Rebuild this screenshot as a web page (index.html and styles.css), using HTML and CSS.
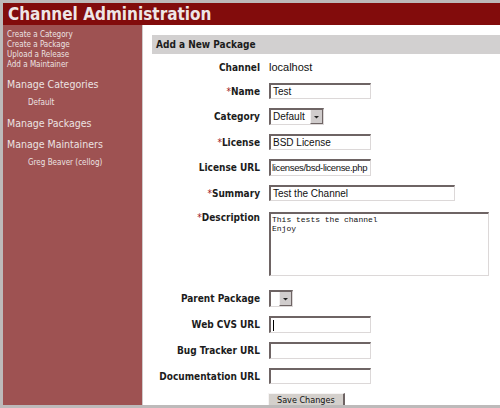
FILE: index.html
```html
<!DOCTYPE html>
<html>
<head>
<meta charset="utf-8">
<link rel="stylesheet" href="styles.css">
</head>
<body>
<div class="frame">
  <header class="topbar"><h1>Channel Administration</h1></header>
  <div class="main">
    <nav class="sidebar">
      <ul class="actions">
        <li>Create a Category</li>
        <li>Create a Package</li>
        <li>Upload a Release</li>
        <li>Add a Maintainer</li>
      </ul>
      <h2>Manage Categories</h2>
      <div class="sub">Default</div>
      <h2>Manage Packages</h2>
      <h2>Manage Maintainers</h2>
      <div class="sub">Greg Beaver (cellog)</div>
    </nav>
    <section class="content">
      <div class="section-head">Add a New Package</div>
      <form class="form">
        <label class="lbl">Channel</label>
        <div class="val plain">localhost</div>

        <label class="lbl"><span class="req">*</span>Name</label>
        <div class="val"><span class="input w100">Test</span></div>

        <label class="lbl">Category</label>
        <div class="val"><span class="select"><span class="sel-text">Default</span><span class="sel-btn"><svg width="7" height="4" viewBox="0 0 7 4"><path d="M1 1h5L3.5 3.5z" fill="#222"/></svg></span></span></div>

        <label class="lbl"><span class="req">*</span>License</label>
        <div class="val"><span class="input w100">BSD License</span></div>

        <label class="lbl">License URL</label>
        <div class="val"><span class="input w100 h17 tight">licenses/bsd-license.php</span></div>

        <label class="lbl"><span class="req">*</span>Summary</label>
        <div class="val"><span class="input w185">Test the Channel</span></div>

        <label class="lbl top"><span class="req">*</span>Description</label>
        <div class="val desc"><span class="textarea">This tests the channel
Enjoy</span></div>

        <label class="lbl parent">Parent Package</label>
        <div class="val parent"><span class="select small"><span class="sel-text"></span><span class="sel-btn"><svg width="7" height="4" viewBox="0 0 7 4"><path d="M1 1h5L3.5 3.5z" fill="#222"/></svg></span></span></div>

        <label class="lbl">Web CVS URL</label>
        <div class="val"><span class="input w100 h17"><span class="caret"></span></span></div>

        <label class="lbl">Bug Tracker URL</label>
        <div class="val"><span class="input w100 h17"></span></div>

        <label class="lbl">Documentation URL</label>
        <div class="val"><span class="input w100"></span></div>

        <div></div>
        <div class="val submit"><span class="button">Save Changes</span></div>
      </form>
    </section>
  </div>
</div>
</body>
</html>
```
FILE: styles.css
```css
html, body {
  margin: 0;
  padding: 0;
}
body {
  width: 500px;
  height: 408px;
  overflow: hidden;
  background: #bdbaba;
  font-family: "DejaVu Sans", Verdana, sans-serif;
}
.frame {
  margin: 3px 0 0 3px;
  height: 402px;
  display: flex;
  flex-direction: column;
  background: #fff;
  overflow: hidden;
}
.topbar {
  height: 22px;
  background: #820c0c;
  flex: none;
}
.topbar h1 {
  margin: 0;
  padding: 0 0 0 5px;
  font-family: "DejaVu Sans Condensed", "DejaVu Sans", sans-serif;
  font-weight: bold;
  font-size: 17px;
  line-height: 22px;
  color: #eee6e6;
}
.main {
  flex: 1;
  display: flex;
  min-height: 0;
}
.sidebar {
  flex: none;
  width: 140px;
  box-sizing: border-box;
  background: #9e5252;
  border-right: 1px solid #cfcaca;
  color: #ece2e2;
  padding: 5px 0 0 4px;
}
.actions {
  list-style: none;
  margin: 0;
  padding: 0;
  font-family: "DejaVu Sans Condensed", "DejaVu Sans", sans-serif;
  font-size: 8px;
  line-height: 10px;
}
.sidebar h2 {
  margin: 7px 0 0;
  font-family: "DejaVu Sans Condensed", "DejaVu Sans", sans-serif;
  font-weight: normal;
  font-size: 10.5px;
  line-height: 14px;
}
.sidebar .sub {
  font-family: "DejaVu Sans Condensed", "DejaVu Sans", sans-serif;
  font-size: 8px;
  line-height: 10px;
  margin-top: 7px;
  padding: 0 0 1px 21px;
}
.content {
  flex: 1;
  padding: 10px 0 0 9px;
  min-width: 0;
}
.section-head {
  height: 19px;
  background: #d2d0d0;
  font-family: "DejaVu Sans Condensed", "DejaVu Sans", sans-serif;
  font-weight: bold;
  font-size: 10px;
  line-height: 19px;
  color: #1c1c1c;
  padding-left: 4px;
}
.form {
  display: grid;
  grid-template-columns: 108px auto;
  column-gap: 9px;
  row-gap: 9px;
  margin-top: 7px;
  align-items: center;
}
.lbl {
  text-align: right;
  font-family: "DejaVu Sans Condensed", "DejaVu Sans", sans-serif;
  font-weight: bold;
  font-size: 10px;
  color: #1c1c1c;
  white-space: nowrap;
}
.lbl.top { align-self: start; padding-top: 2px; }
.req { color: #a01818; font-weight: normal; }
.val {
  display: flex;
  font-family: "Liberation Sans", Arial, sans-serif;
  font-size: 10px;
  color: #111;
}
.val.plain {
  font-size: 11px;
  height: 13px;
  line-height: 13px;
}
.input {
  box-sizing: border-box;
  height: 16px;
  border-style: solid;
  border-width: 2px 1px 1px 2px;
  border-color: #6e6464 #dcd8d8 #dcd8d8 #6e6464;
  background: #fff;
  font-size: 10px;
  line-height: 13px;
  padding: 0 2px;
  white-space: nowrap;
  overflow: hidden;
  display: block;
}
.input.h17 { height: 17px; line-height: 14px; }
.input.tight { padding: 0 0 0 1px; font-size: 9.5px; letter-spacing: -0.35px; }
.w100 { width: 102px; }
.w185 { width: 186px; }
.caret {
  display: inline-block;
  width: 1px;
  height: 11px;
  background: #000;
  vertical-align: middle;
}
.select {
  box-sizing: border-box;
  height: 17px;
  display: flex;
  border-style: solid;
  border-width: 2px 1px 1px 2px;
  border-color: #6e6464 #dcd8d8 #dcd8d8 #6e6464;
  background: #fff;
}
.sel-text {
  width: 36px;
  padding-left: 2px;
  font-size: 10px;
  line-height: 13px;
}
.select.small .sel-text { width: 7px; padding: 0; }
.sel-btn {
  width: 13px;
  background: #d0cccc;
  border-left: 1px solid #f4f2f2;
  border-right: 1px solid #6e6464;
  border-bottom: 1px solid #6e6464;
  box-sizing: border-box;
  display: flex;
  align-items: center;
  justify-content: center;
  margin: 0 0 0 1px;
}
.desc { margin-top: 2px; }
.textarea {
  box-sizing: border-box;
  width: 220px;
  height: 64px;
  border-style: solid;
  border-width: 2px 1px 1px 2px;
  border-color: #6e6464 #dcd8d8 #dcd8d8 #6e6464;
  font-family: "Liberation Mono", "Courier New", monospace;
  font-size: 8px;
  line-height: 9px;
  padding: 1px 1px;
  white-space: pre;
  display: block;
}
.parent { margin-top: 5px; }
.submit { margin-top: 0; }
.button {
  box-sizing: border-box;
  height: 16px;
  padding: 0 8px;
  margin-left: -1px;
  background: #d4d0cc;
  border-style: solid;
  border-width: 1px 2px 2px 1px;
  border-color: #f6f4f4 #6e6464 #6e6464 #f6f4f4;
  font-family: "DejaVu Sans Condensed", "DejaVu Sans", sans-serif;
  font-size: 9px;
  line-height: 12px;
  color: #111;
}
```
